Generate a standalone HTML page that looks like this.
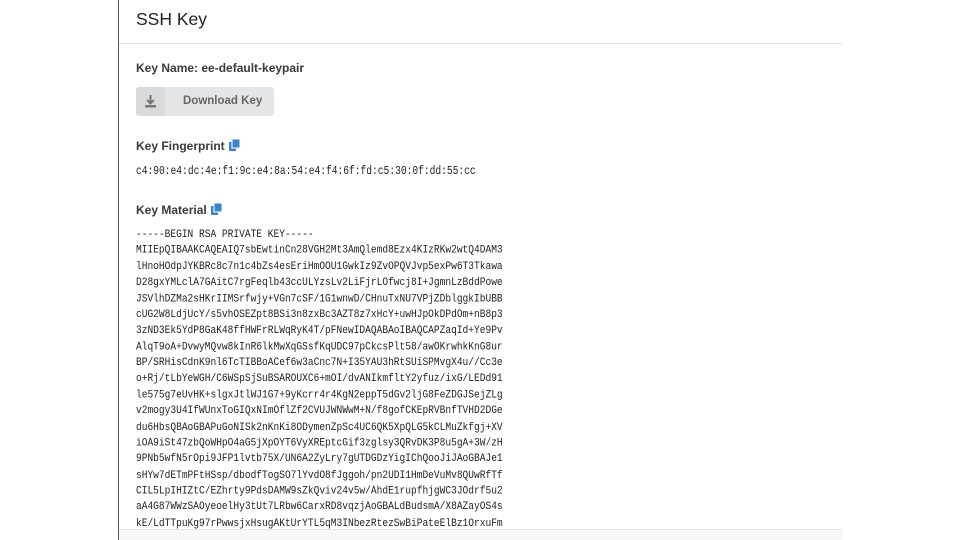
<!DOCTYPE html>
<html style="overflow:hidden;height:540px"><head><meta charset="utf-8"><style>
body{margin:0;width:960px;height:540px;background:#fff;overflow:hidden;font-family:"Liberation Sans",sans-serif;color:#333}
#w{position:relative;width:960px;height:540px;overflow:hidden}
.vl{position:absolute;left:118px;top:0;width:1px;height:540px;background:#555}
.hd{position:absolute;left:136px;top:9px;font-size:17.5px;color:#222}
.hl{position:absolute;left:119px;top:43px;width:723px;height:1px;background:#e2e2e2}
.lab{position:absolute;left:136px;font-size:12px;font-weight:bold;color:#3a3a3a}
.btn{position:absolute;left:136px;top:87px;width:138px;height:29px;background:#e4e5e6;border-radius:3px}
.btn .ic{position:absolute;left:0;top:0;width:29px;height:29px;background:#d9dadb;border-radius:3px 0 0 3px}
.btn span{position:absolute;left:47px;top:8px;font-size:11.5px;color:#666;font-weight:bold}
.mono{position:absolute;left:136px;font-family:"Liberation Mono",monospace;color:#222;white-space:pre}
.fp{top:164px;font-size:9.6px;transform:scaleY(1.25);transform-origin:0 0}
.km{top:226px;font-size:9.55px;line-height:13.375px;transform:scaleY(1.2);transform-origin:0 0}
.copy{display:inline-block;vertical-align:-1px;margin-left:4px}
.bot{position:absolute;left:119px;top:529px;width:723px;height:11px;background:#f7f8fa;border-top:1px solid #e6e6e6;z-index:2}
</style></head><body><div id="w">
<div class="vl"></div>
<div class="hd">SSH Key</div>
<div class="hl"></div>
<div class="lab" style="top:61px">Key Name: ee-default-keypair</div>
<div class="btn"><div class="ic"><svg width="29" height="29" viewBox="0 0 29 29"><path d="M14.5 8v8M11 13l3.5 3.5L18 13" stroke="#777" stroke-width="2" fill="none"/><rect x="9" y="18" width="11" height="2.5" fill="#777"/></svg></div><span>Download Key</span></div>
<div class="lab" style="top:139px">Key Fingerprint<svg class="copy" width="11" height="12" viewBox="0 0 11 12"><rect x="0" y="3" width="7" height="9" fill="#3c84cc"/><rect x="3" y="0" width="8" height="9" fill="#3c84cc" stroke="#fff" stroke-width="1"/></svg></div>
<div class="mono fp">c4:90:e4:dc:4e:f1:9c:e4:8a:54:e4:f4:6f:fd:c5:30:0f:dd:55:cc</div>
<div class="lab" style="top:203px">Key Material<svg class="copy" width="11" height="12" viewBox="0 0 11 12"><rect x="0" y="3" width="7" height="9" fill="#3c84cc"/><rect x="3" y="0" width="8" height="9" fill="#3c84cc" stroke="#fff" stroke-width="1"/></svg></div>
<div class="mono km">-----BEGIN RSA PRIVATE KEY-----
MIIEpQIBAAKCAQEAIQ7sbEwtinCn28VGH2Mt3AmQlemd8Ezx4KIzRKw2wtQ4DAM3
lHnoHOdpJYKBRc8c7n1c4bZs4esEriHmOOU1GwkIz9ZvOPQVJvp5exPw6T3Tkawa
D28gxYMLclA7GAitC7rgFeqlb43ccULYzsLv2LiFjrLOfwcj8I+JgmnLzBddPowe
JSVlhDZMa2sHKrIIMSrfwjy+VGn7cSF/1G1wnwD/CHnuTxNU7VPjZDblggkIbUBB
cUG2W8LdjUcY/s5vhOSEZpt8BSi3n8zxBc3AZT8z7xHcY+uwHJpOkDPdOm+nB8p3
3zND3Ek5YdP8GaK48ffHWFrRLWqRyK4T/pFNewIDAQABAoIBAQCAPZaqId+Ye9Pv
AlqT9oA+DvwyMQvw8kInR6lkMwXqGSsfKqUDC97pCkcsPlt58/awOKrwhkKnG8ur
BP/SRHisCdnK9nl6TcTIBBoACef6w3aCnc7N+I35YAU3hRtSUiSPMvgX4u//Cc3e
o+Rj/tLbYeWGH/C6WSpSjSuBSAROUXC6+mOI/dvANIkmfltY2yfuz/ixG/LEDd91
le575g7eUvHK+slgxJtlWJ1G7+9yKcrr4r4KgN2eppT5dGv2ljG8FeZDGJSejZLg
v2mogy3U4IfWUnxToGIQxNImOflZf2CVUJWNWwM+N/f8gofCKEpRVBnfTVHD2DGe
du6HbsQBAoGBAPuGoNISk2nKnKi8ODymenZpSc4UC6QK5XpQLG5kCLMuZkfgj+XV
iOA9iSt47zbQoWHpO4aG5jXpOYT6VyXREptcGif3zglsy3QRvDK3P8u5gA+3W/zH
9PNb5wfN5rOpi9JFP1lvtb75X/UN6A2ZyLry7gUTDGDzYigIChQooJiJAoGBAJe1
sHYw7dETmPFtHSsp/dbodfTogSO7lYvdO8fJggoh/pn2UDI1HmDeVuMv8QUwRfTf
CIL5LpIHIZtC/EZhrty9PdsDAMW9sZkQviv24v5w/AhdE1rupfhjgWC3JOdrf5u2
aA4G87WWzSAOyeoelHy3tUt7LRbw6CarxRD8vqzjAoGBALdBudsmA/X8AZayOS4s
kE/LdTTpuKg97rPwwsjxHsugAKtUrYTL5qM3INbezRtezSwBiPateElBz1OrxuFm</div>
<div class="bot"></div>
</div></body></html>
